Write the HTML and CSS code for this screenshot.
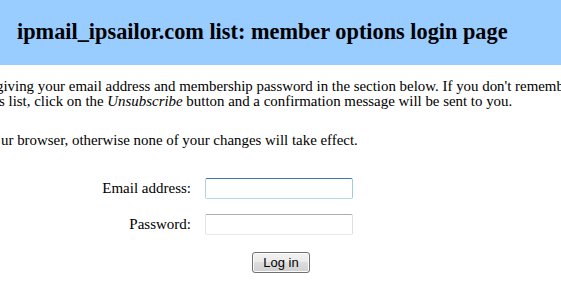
FILE: index.html
```html
<!DOCTYPE html>
<html lang="en">
<head>
<meta charset="utf-8">
<title>ipmail_ipsailor.com list: member options login page</title>
<link rel="stylesheet" href="styles.css">
</head>
<body>
<header class="banner">
  <h1 class="banner-title">ipmail_ipsailor.com list: member options login page</h1>
</header>
<main class="content">
  <p class="para">
    <span class="line line-first">giving your email address and membership password in the section below. If you don't remember your membership password, you can have it emailed to you</span>
    <span class="line line-second">s list, click on the <em>Unsubscribe</em> button and a confirmation message will be sent to you.</span>
  </p>
  <p class="para para-second">
    <span class="line line-third">ur browser, otherwise none of your changes will take effect.</span>
  </p>
  <form class="login" action="#" onsubmit="return false;">
    <label class="login-label" for="email">Email address:</label>
    <input class="login-input login-input-active" id="email" type="text" name="email">
    <label class="login-label" for="password">Password:</label>
    <input class="login-input" id="password" type="password" name="password">
    <button class="login-button" type="submit">Log in</button>
  </form>
</main>
</body>
</html>
```

FILE: styles.css
```css
html, body {
  margin: 0;
  padding: 0;
  background: #ffffff;
}

body {
  width: 561px;
  height: 284px;
  overflow: hidden;
  font-family: "Liberation Serif", "Times New Roman", serif;
  color: #000000;
}

.banner {
  height: 65px;
  background: #99ccff;
  box-sizing: border-box;
  padding-top: 19px;
  padding-left: 17px;
}

.banner-title {
  margin: 0;
  font-size: 22.3px;
  line-height: 25px;
  font-weight: bold;
  white-space: nowrap;
}

.content {
  padding-top: 14px;
}

.para {
  margin: 0;
  font-size: 14.9px;
  line-height: 15px;
  white-space: nowrap;
}

.para-second {
  margin-top: 24px;
}

.line {
  display: block;
}

.line-first {
  margin-left: -4px;
}

.line-second {
  margin-left: -1px;
}

.line-third {
  margin-left: 1px;
}

.login {
  margin-top: 30px;
  display: grid;
  grid-template-columns: 191px 148px;
  column-gap: 14px;
  row-gap: 15px;
  align-items: center;
}

.login-label {
  justify-self: end;
  font-size: 15px;
  line-height: 17px;
}

.login-input {
  box-sizing: border-box;
  width: 148px;
  height: 21px;
  margin: 0;
  padding: 1px 3px;
  background: #ffffff;
  border: 1px solid;
  border-color: #abadb3 #dbdfe6 #e3e9ef #e2e3ea;
  border-radius: 2px;
  font: 13px "Liberation Sans", Arial, sans-serif;
  outline: none;
}

.login-input-active {
  border-color: #3d7bad #a4c9e3 #b7d9ed #b5cfe7;
}

.login-button {
  grid-column: 2;
  justify-self: center;
  margin-top: 2px;
  margin-left: 4px;
  box-sizing: border-box;
  width: 58px;
  height: 21px;
  padding: 0;
  border: 1px solid #707070;
  border-radius: 3px;
  background: linear-gradient(#f2f2f2 0%, #ebebeb 45%, #dddddd 50%, #cfcfcf 100%);
  box-shadow: inset 0 0 0 1px #fcfcfc;
  font: 13px "Liberation Sans", Arial, sans-serif;
  color: #000000;
}
```
